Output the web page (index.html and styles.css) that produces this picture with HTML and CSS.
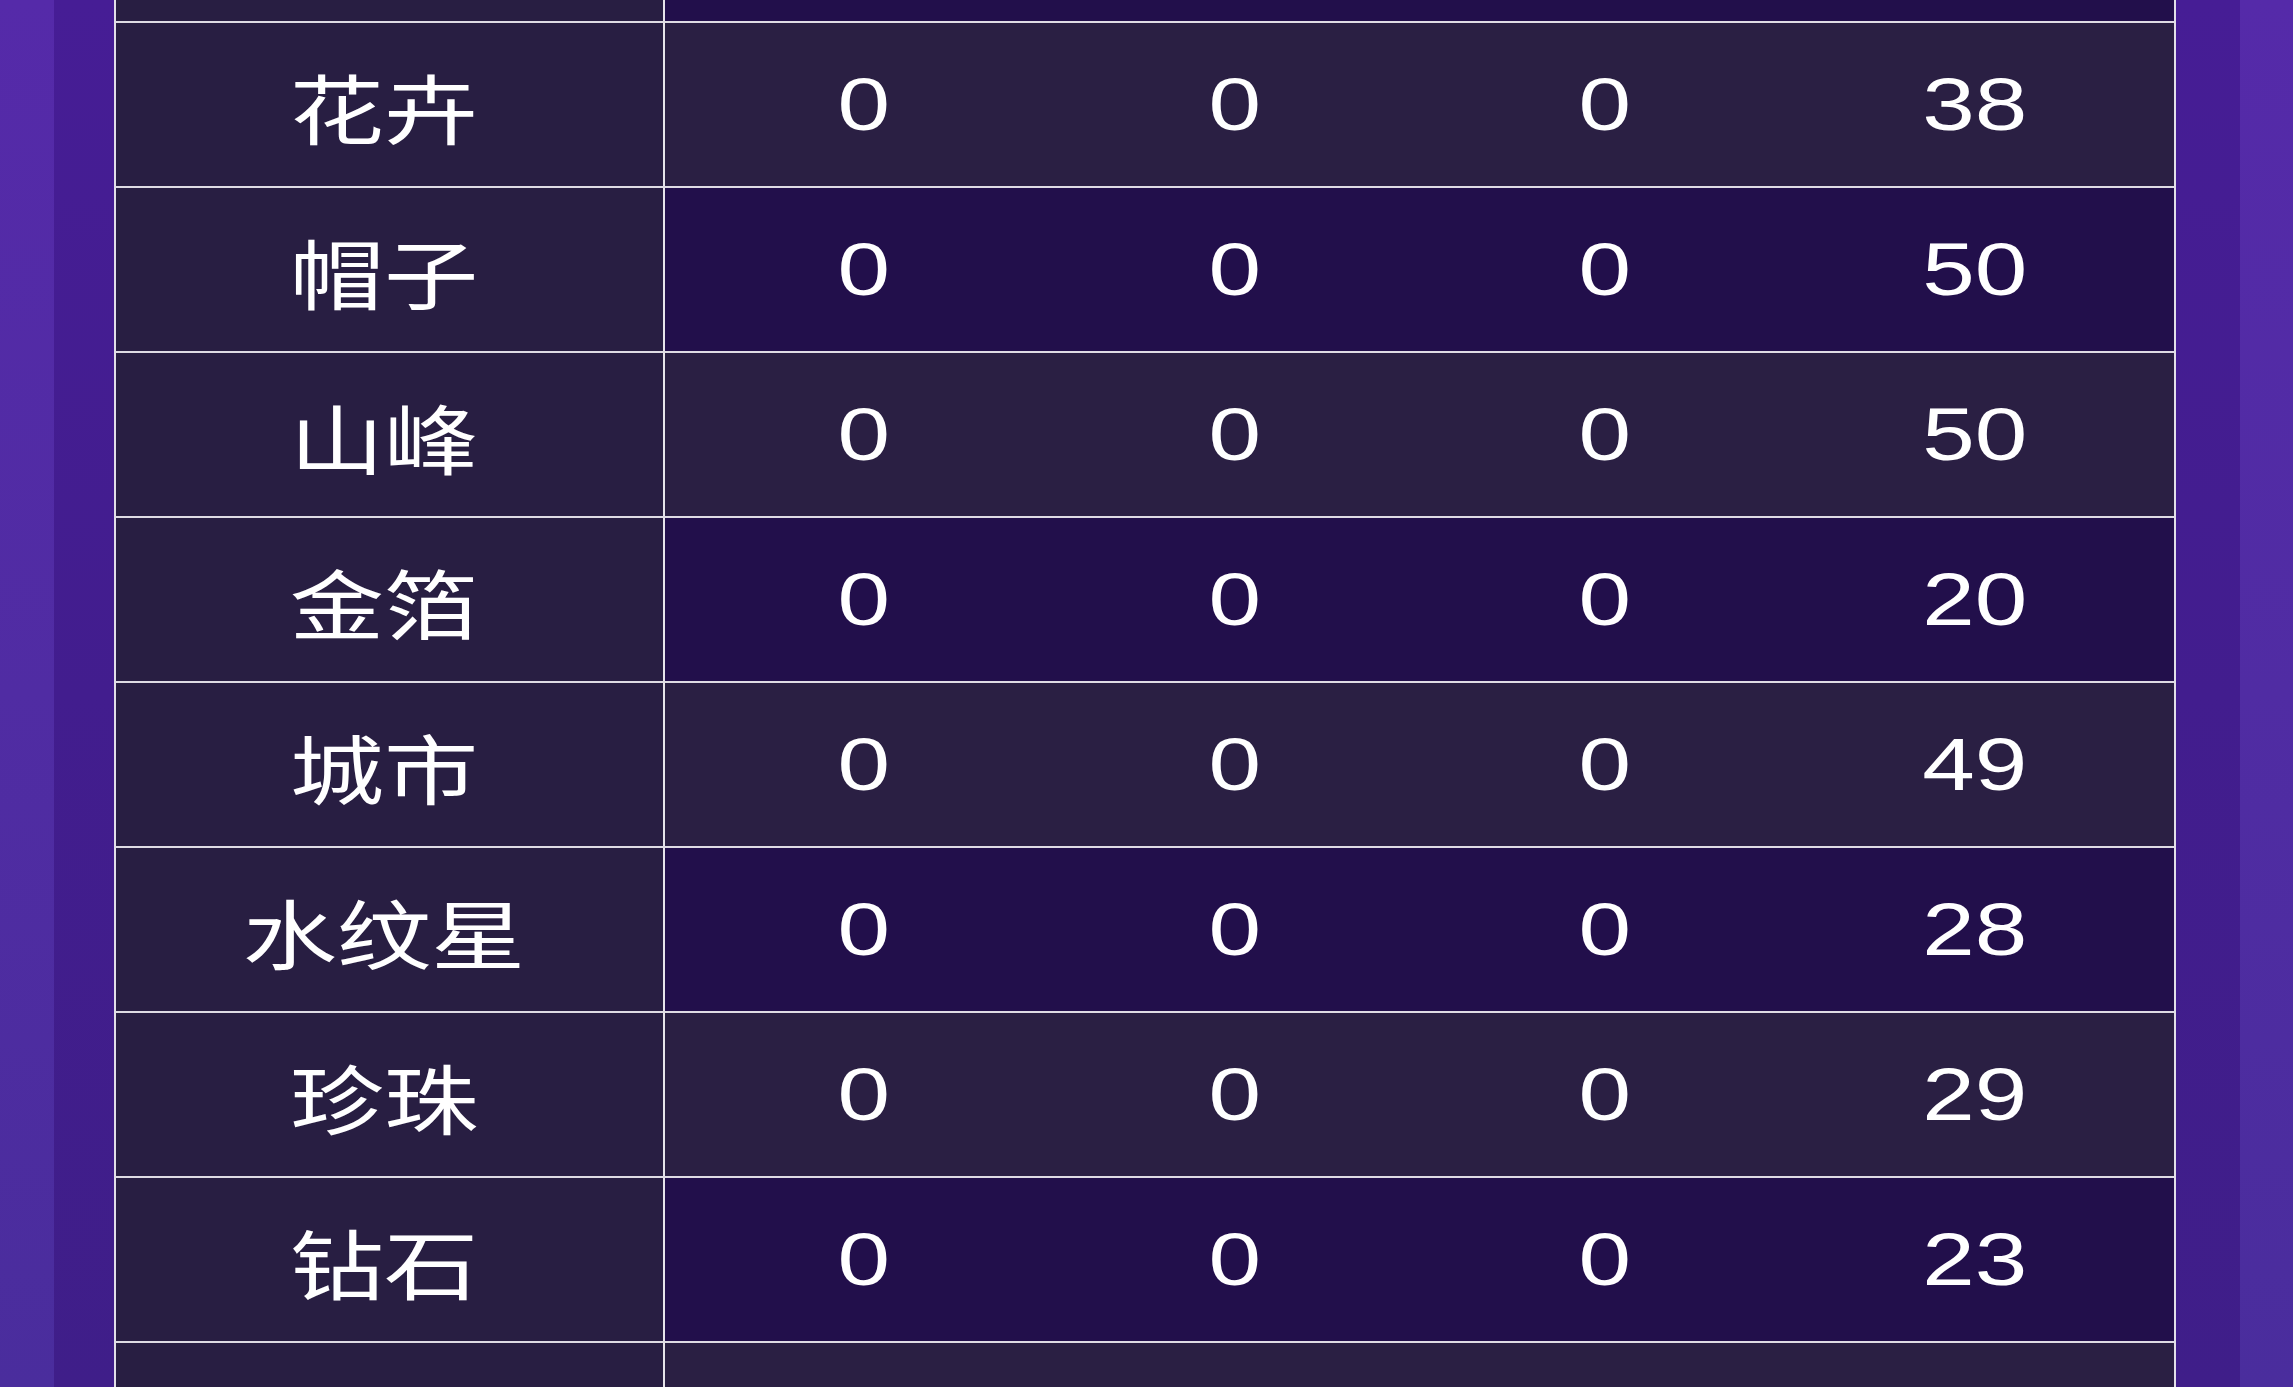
FILE: index.html
```html
<!DOCTYPE html>
<html lang="zh-CN">
<head>
<meta charset="utf-8">
<title>统计表</title>
<link rel="stylesheet" href="styles.css">
</head>
<body>
<div class="page">
  <div class="band band-outer"></div>
  <div class="band band-inner"></div>
  <div class="table">
    <div class="row row-purple"><div class="label"></div><div class="nums"><div class="num"></div><div class="num"></div><div class="num"></div><div class="num"></div></div></div>
    <div class="row row-grey"><div class="label"><span class="t cjk">花卉</span></div><div class="nums"><div class="num"><span class="t">0</span></div><div class="num"><span class="t">0</span></div><div class="num"><span class="t">0</span></div><div class="num"><span class="t">38</span></div></div></div>
    <div class="row row-purple"><div class="label"><span class="t cjk">帽子</span></div><div class="nums"><div class="num"><span class="t">0</span></div><div class="num"><span class="t">0</span></div><div class="num"><span class="t">0</span></div><div class="num"><span class="t">50</span></div></div></div>
    <div class="row row-grey"><div class="label"><span class="t cjk">山峰</span></div><div class="nums"><div class="num"><span class="t">0</span></div><div class="num"><span class="t">0</span></div><div class="num"><span class="t">0</span></div><div class="num"><span class="t">50</span></div></div></div>
    <div class="row row-purple"><div class="label"><span class="t cjk">金箔</span></div><div class="nums"><div class="num"><span class="t">0</span></div><div class="num"><span class="t">0</span></div><div class="num"><span class="t">0</span></div><div class="num"><span class="t">20</span></div></div></div>
    <div class="row row-grey"><div class="label"><span class="t cjk">城市</span></div><div class="nums"><div class="num"><span class="t">0</span></div><div class="num"><span class="t">0</span></div><div class="num"><span class="t">0</span></div><div class="num"><span class="t">49</span></div></div></div>
    <div class="row row-purple"><div class="label"><span class="t cjk">水纹星</span></div><div class="nums"><div class="num"><span class="t">0</span></div><div class="num"><span class="t">0</span></div><div class="num"><span class="t">0</span></div><div class="num"><span class="t">28</span></div></div></div>
    <div class="row row-grey"><div class="label"><span class="t cjk">珍珠</span></div><div class="nums"><div class="num"><span class="t">0</span></div><div class="num"><span class="t">0</span></div><div class="num"><span class="t">0</span></div><div class="num"><span class="t">29</span></div></div></div>
    <div class="row row-purple"><div class="label"><span class="t cjk">钻石</span></div><div class="nums"><div class="num"><span class="t">0</span></div><div class="num"><span class="t">0</span></div><div class="num"><span class="t">0</span></div><div class="num"><span class="t">23</span></div></div></div>
    <div class="row row-grey"><div class="label"></div><div class="nums"><div class="num"></div><div class="num"></div><div class="num"></div><div class="num"></div></div></div>
  </div>
  <div class="band band-inner band-inner-r"></div>
  <div class="band band-outer band-outer-r"></div>
</div>
</body>
</html>
```
FILE: styles.css
```css
html, body {
  margin: 0;
  padding: 0;
  height: 100%;
  overflow: hidden;
  background: #2a1f42;
}

.page {
  display: flex;
  height: 1387px;
  overflow: hidden;
}

.band {
  flex: none;
  height: 100%;
}

.band-outer {
  width: 54px;
  background: linear-gradient(to bottom, #552aa9 0%, #502ca3 50%, #4a2d9d 100%);
}

.band-outer-r {
  width: 53px;
}

.band-inner {
  width: 60px;
  background: linear-gradient(to bottom, #461d95 0%, #421d8e 50%, #3f1e89 100%);
}

.band-inner-r {
  width: 64px;
}

.table {
  flex: none;
  width: 2062px;
  box-sizing: border-box;
  border-left: 2px solid #e2dfe8;
  border-right: 2px solid #e2dfe8;
  margin-top: -142px;
  display: flex;
  flex-direction: column;
  align-self: flex-start;
}

.row {
  display: flex;
  height: 165px;
  flex: none;
  box-sizing: border-box;
  border-bottom: 2px solid #dedbe4;
}

.label {
  flex: none;
  width: 549px;
  box-sizing: border-box;
  padding-right: 12px;
  border-right: 2px solid #e6e3ea;
  background: #281e42;
  display: flex;
  align-items: center;
  justify-content: center;
}

.nums {
  flex: 1;
  display: grid;
  grid-template-columns: repeat(4, 1fr);
  padding: 0 14px;
}

.row-grey .nums {
  background: #2a1f43;
}

.row-purple .nums {
  background: #220f4b;
}

.num {
  display: flex;
  align-items: center;
  justify-content: center;
}

.t {
  display: inline-block;
  color: #ffffff;
  font-family: "Liberation Sans", Arial, sans-serif;
  font-size: 75px;
  line-height: 1;
  transform: scaleX(1.26);
  white-space: nowrap;
}

.cjk {
  font-family: "Noto Sans CJK SC", "Noto Sans", sans-serif;
  font-size: 76px;
  transform: scaleX(1.24) translateY(1px);
}
```
